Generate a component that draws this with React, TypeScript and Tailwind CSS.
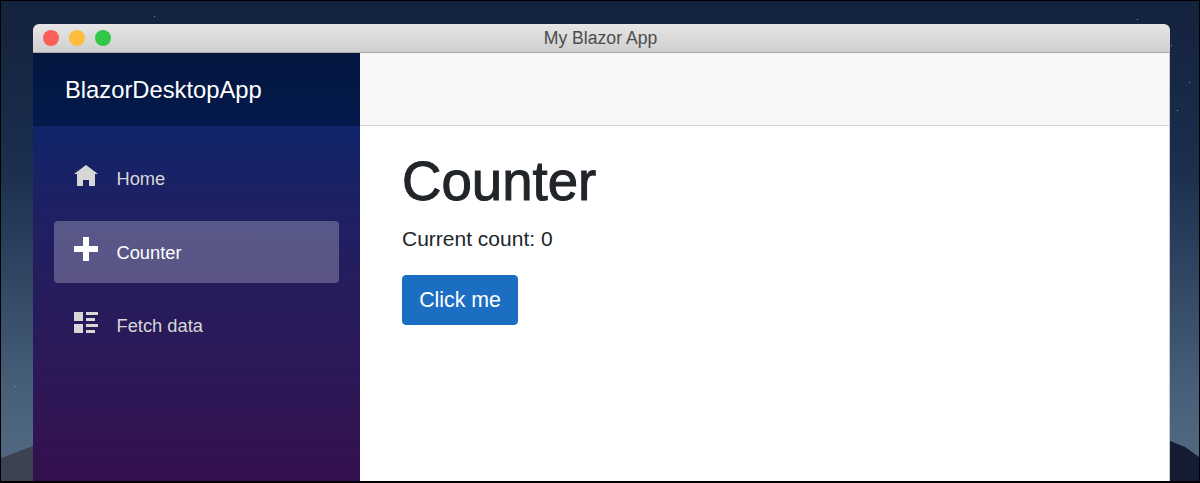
const sans = "font-['Liberation_Sans',Arial,sans-serif]";

function NavItem({ label, path, active, iconClass }: { label: string; path: string; active?: boolean; iconClass: string }) {
  return (
    <div className={"flex h-[62px] items-center rounded-[4px] pl-[20px] " + (active ? "bg-[#ffffff40] text-white" : "text-[#d7d7d7]")}>
      <svg viewBox="0 0 8 8" className={"mr-[18.5px] h-[24px] w-[24px] " + iconClass} fill="currentColor">
        <path d={path} />
      </svg>
      <span className="translate-y-[0.5px] text-[18.3px]">{label}</span>
    </div>
  );
}

export default function App() {
  return (
    <div className={"relative h-[483px] w-[1200px] overflow-hidden bg-black " + sans}>
      {/* wallpaper */}
      <svg className="absolute inset-0 h-full w-full" viewBox="0 0 1200 483" preserveAspectRatio="none">
        <defs>
          <linearGradient id="sky" x1="0" y1="0" x2="0" y2="1">
            <stop offset="0" stopColor="#13223d" />
            <stop offset="0.35" stopColor="#1b2e4e" />
            <stop offset="0.8" stopColor="#465e78" />
            <stop offset="1" stopColor="#566c84" />
          </linearGradient>
        </defs>
        <rect x="1" y="1" width="1198" height="480" fill="url(#sky)" />
        <path d="M1 458 L33 446 L33 481 L1 481 Z" fill="#3d4250" />
        <path d="M1170 441 L1185 447 L1199 457 L1199 481 L1170 481 Z" fill="#131c33" />
        <g fill="#7f93a8">
          <rect x="154" y="16" width="1" height="1" />
          <rect x="15" y="386" width="1" height="1" />
          <rect x="1137" y="19" width="1" height="1" />
          <rect x="1171" y="45" width="1" height="1" />
          <rect x="1189" y="82" width="1" height="1" />
          <rect x="1177" y="110" width="1" height="1" />
          <rect x="1197" y="425" width="1" height="1" />
        </g>
      </svg>

      <div className="relative flex h-[481px] flex-col pl-[33px] pr-[30px] pt-[24px]">
        {/* title bar */}
        <div className="relative flex h-[29px] shrink-0 items-center rounded-t-[6px] border-b border-[#a9a9a9] bg-gradient-to-b from-[#e6e6e6] to-[#cfcfcf]">
          <div className="flex gap-[10px] pl-[10px]">
            <span className="h-[16px] w-[16px] rounded-full bg-[#fc5f57]" />
            <span className="h-[16px] w-[16px] rounded-full bg-[#fdbc3e]" />
            <span className="h-[16px] w-[16px] rounded-full bg-[#33c748]" />
          </div>
          <span className="absolute inset-x-0 -translate-x-[1px] text-center text-[17.6px] text-[#4c4c4c]">My Blazor App</span>
        </div>

        <div className="flex min-h-0 flex-1">
          {/* sidebar */}
          <aside className="flex w-[327px] shrink-0 flex-col">
            <div className="flex h-[73px] shrink-0 items-center bg-gradient-to-b from-[#03163f] to-[#051a4c] pl-[32px] text-[23.75px] text-white">BlazorDesktopApp</div>
            <nav className="flex flex-1 flex-col gap-[11.5px] bg-gradient-to-b from-[#10246a] to-[#34104e] px-[21px] pt-[21px]">
              <NavItem label="Home" iconClass="-translate-y-[1px]" path="M4 0l-4 3h1v4h2v-2h2v2h2v-4.03l1 .03-4-3z" />
              <NavItem label="Counter" iconClass="-translate-y-[3px]" active path="M3 0v3h-3v2h3v3h2v-3h3v-2h-3v-3h-2z" />
              <NavItem label="Fetch data" iconClass="-translate-y-[1px]" path="M0 0v3h3v-3h-3zm4 0v1h4v-1h-4zm0 2v1h3v-1h-3zm-4 2v3h3v-3h-3zm4 0v1h4v-1h-4zm0 2v1h3v-1h-3z" />
            </nav>
          </aside>

          {/* main */}
          <main className="flex min-w-0 flex-1 flex-col border-r border-[#c8c8c8] bg-white">
            <div className="h-[73px] shrink-0 border-b border-[#d6d5d5] bg-[#f7f7f7]" />
            <div className="pl-[42px] pt-[24px] text-[#212529]">
              <h1 className="text-[54.6px] font-normal leading-[64px] [-webkit-text-stroke:1px_#212529]">Counter</h1>
              <p className="mt-[10px] text-[21px] leading-[30px]">Current count: 0</p>
              <button className="mt-[21px] h-[50px] w-[116px] rounded-[4px] border border-[#1b6cbf] bg-[#1b6ec2] pt-[2px] text-[21.3px] text-white">Click me</button>
            </div>
          </main>
        </div>
      </div>
    </div>
  );
}
